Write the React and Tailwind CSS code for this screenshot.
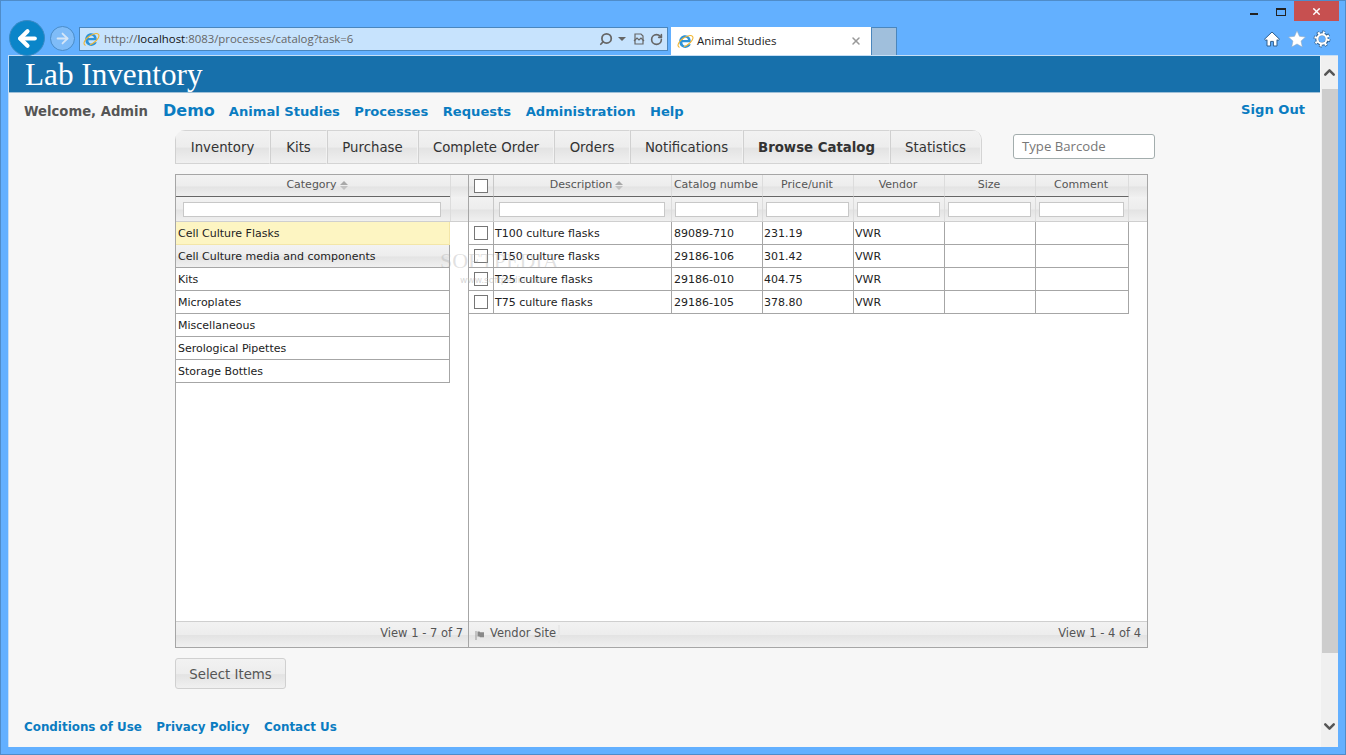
import React from "react";
import { X, Search, RotateCw, ChevronDown, ChevronUp, ArrowLeft, ArrowRight } from "lucide-react";

const band = "bg-[linear-gradient(#f2f2f2,#ededed_50%,#e3e3e3_54%,#f0f0f0)]";
const navLink = "text-[13.1px] font-bold text-[#0a7cc1]";
const footLink = "text-[11.9px] font-bold text-[#0a7cc1]";

const IeLogo = ({ className }) => (
  <svg viewBox="0 0 20 20" className={className}>
    <path d="M3 10.9h13.2c.4-4.8-2.4-8.2-6.4-8.2-4.2 0-7.2 3.2-7.2 7.4 0 4.4 3 7.4 7.2 7.4 3.1 0 5.5-1.6 6.4-4.2h-3.5c-.6 1-1.6 1.6-2.9 1.6-2 0-3.4-1.5-3.5-4zm3.3-2.6c.2-1.8 1.6-2.9 3.3-2.9 1.8 0 3.2 1.1 3.3 2.9z" fill="#2d93d9" />
    <ellipse cx="10" cy="10" rx="10.2" ry="4.6" transform="rotate(-35 10 10)" fill="none" stroke="#f2b632" strokeWidth="1.3" strokeDasharray="17 5 30" />
  </svg>
);

const SortArrows = () => (
  <span className="ml-[3px] inline-flex flex-col gap-px align-middle">
    <span className="h-0 w-0 border-x-[4px] border-b-[4px] border-x-transparent border-b-[#a8a8a8]" />
    <span className="h-0 w-0 border-x-[4px] border-t-[4px] border-x-transparent border-t-[#c2c2c2]" />
  </span>
);

const Checkbox = () => <span className="block h-[14px] w-[14px] border border-[#767676] bg-white" />;

const categories = ["Cell Culture Flasks", "Cell Culture media and components", "Kits", "Microplates", "Miscellaneous", "Serological Pipettes", "Storage Bottles"];

const columns = [
  { label: "Description", width: "w-[178px]", sort: true, filter: "pl-[5px] pr-[6px]", cell: "pl-[1px]" },
  { label: "Catalog numbe", width: "w-[91px]", filter: "pl-[3px] pr-[4px]", cell: "pl-[2px]" },
  { label: "Price/unit", width: "w-[91px]", filter: "pl-[3px] pr-[4px]", cell: "pl-[1px]" },
  { label: "Vendor", width: "w-[91px]", filter: "pl-[3px] pr-[4px]", cell: "pl-[1px]" },
  { label: "Size", width: "w-[91px]", filter: "pl-[3px] pr-[4px]", cell: "pl-[1px]" },
  { label: "Comment", width: "w-[93px]", filter: "pl-[3px] pr-[4px]", cell: "pl-[1px]" },
];

const items = [
  ["T100 culture flasks", "89089-710", "231.19", "VWR"],
  ["T150 culture flasks", "29186-106", "301.42", "VWR"],
  ["T25 culture flasks", "29186-010", "404.75", "VWR"],
  ["T75 culture flasks", "29186-105", "378.80", "VWR"],
];

const tabs = [
  ["Inventory", "w-[95px]"],
  ["Kits", "w-[57px]"],
  ["Purchase", "w-[91px]"],
  ["Complete Order", "w-[136px]"],
  ["Orders", "w-[76px]"],
  ["Notifications", "w-[113px]"],
  ["Browse Catalog", "w-[147px]"],
  ["Statistics", "w-[91px]"],
];

const CategoryGrid = () => (
  <div className="flex h-[474px] w-[293px] flex-col border-y border-l border-[#a6a6a6] bg-white">
    <div className={`flex h-[22px] ${band}`}>
      <div className="flex w-[274px] items-center justify-center border-b border-[#666] pl-[8px] text-[11px] text-[#555]">
        Category <SortArrows />
      </div>
      <div className="flex-1 border-l border-[#dcdcdc]" />
    </div>
    <div className={`flex h-[25px] ${band} border-b border-[#cfcfcf]`}>
      <div className="flex w-[274px] items-center pr-[9px] pl-[7px]">
        <div className="h-[15px] w-full border border-[#c8c8c8] bg-white" />
      </div>
      <div className="flex-1 border-l border-[#dcdcdc]" />
    </div>
    <div className="w-[274px] flex-1">
      {categories.map((name, i) => (
        <div
          key={name}
          className={`flex h-[23px] items-center border-r pt-[3px] pl-[2px] text-[11px] text-[#222] ${
            i === 0 ? "border-b border-[#f3e6a8] bg-[#fdf5c2]" : i === 1 ? `border-b border-[#a6a6a6] ${band}` : "border-b border-[#a6a6a6]"
          } ${i === 0 ? "border-r-[#f3e6a8]" : "border-r-[#a6a6a6]"}`}
        >
          {name}
        </div>
      ))}
    </div>
    <div className={`flex h-[26px] items-center justify-end border-t border-[#cfcfcf] pr-[5px] pb-[2px] text-[11.5px] text-[#555] ${band}`}>View 1 - 7 of 7</div>
  </div>
);

const ItemsGrid = () => (
  <div className="flex h-[474px] w-[680px] flex-col border border-[#a6a6a6] bg-white">
    <div className={`flex h-[22px] ${band}`}>
      <div className="flex w-[25px] items-center justify-center border-r border-b border-r-[#c8c8c8] border-b-[#666]">
        <Checkbox />
      </div>
      {columns.map((c) => (
        <div
          key={c.label}
          className={`flex ${c.width} shrink-0 items-center justify-center overflow-hidden border-r border-b border-r-[#dcdcdc] border-b-[#666] pb-[1px] text-[11px] whitespace-nowrap text-[#555] ${c.sort ? "pl-[8px]" : "pr-[2px]"}`}
        >
          {c.label}
          {c.sort && <SortArrows />}
        </div>
      ))}
    </div>
    <div className={`flex h-[25px] border-b border-[#cfcfcf] ${band}`}>
      <div className="w-[25px] border-r border-[#c8c8c8]" />
      {columns.map((c) => (
        <div key={c.label} className={`flex ${c.width} shrink-0 items-center border-r border-[#dcdcdc] ${c.filter}`}>
          <div className="h-[15px] w-full border border-[#c8c8c8] bg-white" />
        </div>
      ))}
    </div>
    <div className="flex-1">
      {items.map((row) => (
        <div key={row[0]} className="flex h-[23px] w-[660px] border-b border-[#a6a6a6] text-[11px] text-[#222]">
          <div className="flex w-[25px] items-center justify-center border-r border-[#a6a6a6]">
            <Checkbox />
          </div>
          {columns.map((c, i) => (
            <div key={c.label} className={`flex ${c.width} shrink-0 items-center border-r border-[#a6a6a6] pt-[3px] ${c.cell}`}>
              {row[i]}
            </div>
          ))}
        </div>
      ))}
    </div>
    <div className={`flex h-[26px] items-center justify-between border-t border-[#cfcfcf] pr-[6px] pb-[2px] text-[11.5px] text-[#555] ${band}`}>
      <div className="flex h-[18px] items-center border-r-2 border-[#e8e8e8] pr-[2px] pl-[6px]">
        <svg viewBox="0 0 10 10" className="mr-[5px] h-[10px] w-[10px] translate-y-px">
          <path d="M1 1v9" stroke="#999" strokeWidth="1" />
          <path d="M2.5 1.5h2l.7.8h3.8v5H5l-.7-.8H2.5z" fill="#888" />
        </svg>
        Vendor Site
      </div>
      <div>View 1 - 4 of 4</div>
    </div>
  </div>
);

export default function App() {
  return (
    <div className="relative flex h-[755px] w-[1346px] flex-col overflow-hidden border border-[#4f8cc9] bg-[#63b0ff] font-['DejaVu_Sans',sans-serif]">
      {/* window controls */}
      <div className="flex h-[20px] items-start justify-end pr-[6px]">
        <div className="mt-[12px] mr-[18px] h-[2px] w-[8px] bg-[#222]" />
        <div className="mt-[7px] mr-[8px] h-[8px] w-[10px] border border-t-2 border-[#222]" />
        <div className="flex h-[20px] w-[45px] items-center justify-center bg-[#c75050]">
          <X size={11} strokeWidth={3} className="text-white" />
        </div>
      </div>

      {/* browser toolbar */}
      <div className="z-10 flex h-[34px] items-start pl-[8px]">
        <div className="flex h-[36px] w-[36px] -translate-y-px items-center justify-center rounded-full border border-[#3a8ac4] bg-[#0a85c9]">
          <ArrowLeft size={25} strokeWidth={4} className="text-white" />
        </div>
        <div className="mt-[5px] ml-[5px] flex h-[25px] w-[25px] items-center justify-center rounded-full border border-[#4a8cc8] bg-[#7fbcf8]">
          <ArrowRight size={17} strokeWidth={2.5} className="text-[#d5e6f7]" />
        </div>
        <div className="mt-[6px] ml-[4px] flex h-[24px] w-[589px] items-center border border-[#4a86bd] bg-[#c7e3fd] pr-[4px] pl-[3px] font-['Open_Sans',sans-serif] text-[11.4px] text-[#666]">
          <IeLogo className="mr-[4px] h-[17px] w-[17px] shrink-0" />
          <span>http://</span>
          <span className="text-[#111]">localhost</span>
          <span>:8083/processes/catalog?task=6</span>
          <div className="ml-auto flex items-center gap-[5px] text-[#666]">
            <Search size={14} strokeWidth={3} className="-scale-x-100" />
            <span className="h-0 w-0 border-x-[4px] border-t-[4px] border-x-transparent border-t-[#666]" />
            <svg viewBox="0 0 12 12" className="ml-[2px] h-[12px] w-[12px]">
              <path d="M2 1h6l2 2v8H2z" fill="none" stroke="#666" strokeWidth="1.2" />
              <path d="M1 8l3-3 2 2 2-2 3 3" fill="none" stroke="#666" strokeWidth="1.2" />
            </svg>
            <RotateCw size={13} strokeWidth={3} />
          </div>
        </div>
        <div className="mt-[6px] ml-[3px] flex h-[28px] w-[200px] items-center bg-white pr-[9px] pl-[6px] font-['Open_Sans',sans-serif] text-[11.5px] text-[#222]">
          <IeLogo className="mr-[3px] h-[17px] w-[17px] shrink-0" />
          Animal Studies
          <X size={12} strokeWidth={3} className="ml-auto text-[#999]" />
        </div>
        <div className="mt-[6px] h-[28px] w-[26px] border border-b-0 border-[#4a86bd] bg-[#a0bfdc]" />
        <div className="mt-[9px] ml-auto flex items-center gap-[7px] pr-[14px]">
          <svg viewBox="0 0 18 18" className="h-[18px] w-[18px]">
            <path d="M9 2 1.5 9.2 3 10.6l1-.9V16h3.6v-4.6h2.8V16H14V9.7l1 .9 1.5-1.4z" fill="white" stroke="#2f5f8f" strokeWidth="1" strokeLinejoin="round" />
          </svg>
          <svg viewBox="0 0 18 18" className="h-[18px] w-[18px]">
            <path d="m9 .8 2.5 5.5 6 .7-4.4 4 1.2 6L9 14l-5.3 3 1.2-6-4.4-4 6-.7z" fill="white" stroke="#8fa9c4" strokeWidth=".6" strokeLinejoin="round" />
          </svg>
          <svg viewBox="0 0 18 18" className="h-[18px] w-[18px]">
            <circle cx="9" cy="9" r="6.6" fill="none" stroke="#2f5f8f" strokeWidth="3.6" strokeDasharray="2.6 2.58" />
            <circle cx="9" cy="9" r="5" fill="none" stroke="#2f5f8f" strokeWidth="3.6" />
            <circle cx="9" cy="9" r="6.4" fill="none" stroke="white" strokeWidth="2.6" strokeDasharray="2 3.03" />
            <circle cx="9" cy="9" r="4.6" fill="none" stroke="white" strokeWidth="2.2" />
          </svg>
        </div>
      </div>

      {/* page */}
      <div className="mr-[7px] ml-[7px] flex h-[692px] border-t border-l border-[#c7dff5]">
        <div className="flex w-[1312px] flex-col border-r border-[#f7f7f7] bg-[#f7f7f7]">
          <div className="flex h-[37px] items-center border-b border-[#9fc0d8] bg-[#1770ab] pt-[2px] pl-[16px] font-['Liberation_Serif',serif] text-[31.2px] leading-none text-white">
            Lab Inventory
          </div>

          <div className="flex h-[36px] items-center pr-[15px] pl-[15px]">
            <span className="mr-[15px] translate-y-px text-[13.2px] font-bold text-[#555]">Welcome, Admin</span>
            <span className="mr-[14px] text-[16px] font-bold text-[#0a7cc1]">Demo</span>
            <div className="flex items-center gap-[14.5px] pt-px">
              {["Animal Studies", "Processes", "Requests", "Administration", "Help"].map((label) => (
                <span key={label} className={navLink}>{label}</span>
              ))}
            </div>
            <span className={`ml-auto -translate-y-px ${navLink}`}>Sign Out</span>
          </div>

          <div className="flex items-start pt-[1px] pl-[166px]">
            <div className="flex h-[34px] overflow-hidden rounded-t-[10px] border-r border-[#d4d4d4]">
              {tabs.map(([label, width]) => (
                <div
                  key={label}
                  className={`flex ${width} items-center justify-center border-y border-r border-l border-y-[#d4d4d4] border-r-[#f2f2f2] border-l-[#d0d0d0] pt-px text-[13.3px] text-[#333] ${band} ${label === "Browse Catalog" ? "font-bold" : ""}`}
                >
                  {label}
                </div>
              ))}
            </div>
            <div className="mt-[4px] ml-[31px] flex h-[25px] w-[142px] items-center rounded-[3px] border border-[#a3adad] bg-white pl-[8px] font-['Open_Sans',sans-serif] text-[13.2px] text-[#777]">
              Type Barcode
            </div>
          </div>

          <div className="mt-[10px] ml-[166px] flex">
            <CategoryGrid />
            <ItemsGrid />
          </div>

          <div className={`mt-[10px] ml-[166px] flex h-[31px] w-[111px] items-center justify-center rounded-[3px] border border-[#d0d0d0] pt-[2px] text-[13.3px] text-[#555] ${band}`}>
            Select Items
          </div>

          <div className="mt-[30px] flex gap-[14.5px] pl-[15px]">
            {["Conditions of Use", "Privacy Policy", "Contact Us"].map((label) => (
              <span key={label} className={footLink}>{label}</span>
            ))}
          </div>
        </div>

        {/* scrollbar */}
        <div className="flex w-[17px] flex-col bg-[#f0f0f0]">
          <div className="flex h-[33px] items-center justify-center text-[#555]">
            <ChevronUp size={17} strokeWidth={3.5} />
          </div>
          <div className="ml-px h-[564px] bg-[#cdcdcd]" />
          <div className="flex flex-1 items-end justify-center pb-[12px] text-[#555]">
            <ChevronDown size={17} strokeWidth={3.5} />
          </div>
        </div>
      </div>

      {/* watermark lying over the grids */}
      <div className="pointer-events-none absolute top-[243px] left-[439px] font-['Liberation_Serif',serif] text-[22px] text-[#aaa]/35">SOFTPEDIA</div>
      <div className="pointer-events-none absolute top-[273px] left-[459px] text-[9px] text-[#bbb]/60">www.softpedia.com</div>
    </div>
  );
}
